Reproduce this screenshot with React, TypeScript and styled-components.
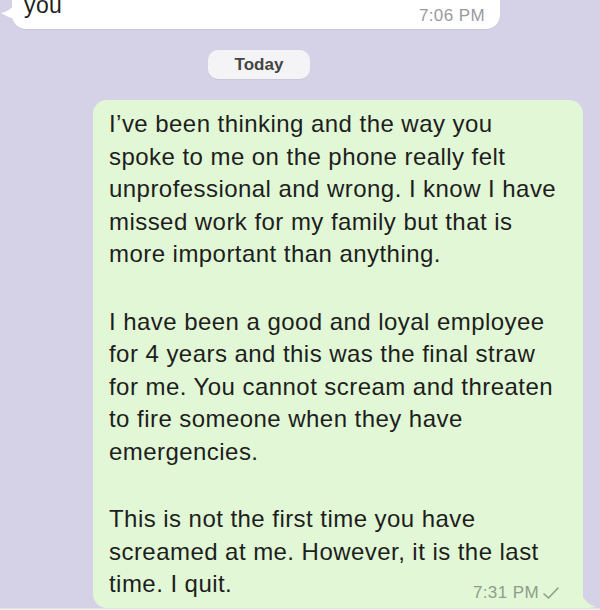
import styled, { createGlobalStyle } from 'styled-components';

const GlobalStyle = createGlobalStyle`
    html, body {
        margin: 0;
        padding: 0;
        background: #d5d1e7;
    }
    body {
        font-family: 'Liberation Sans', Arial, sans-serif;
        -webkit-font-smoothing: antialiased;
    }
`;

const Screen = styled.div`
    width: 600px;
    height: 610px;
    overflow: hidden;
    display: flex;
    flex-direction: column;
    background: #d5d1e7;
`;

// scrolled thread, first bubble partly off the top
const Thread = styled.div`
    flex: 1;
    display: flex;
    flex-direction: column;
    margin-top: -12px;
`;

const Incoming = styled.div`
    position: relative;
    margin-left: 12px;
    width: 488px;
    box-sizing: border-box;
    padding: 4px 15px 4px 12px;
    background: #ffffff;
    border-radius: 14px;
    display: flex;
    justify-content: space-between;
    align-items: flex-end;
    box-shadow: 0 1px 0 rgba(0, 0, 0, 0.06);
`;

const IncomingText = styled.div`
    font-size: 23px;
    line-height: 26px;
    letter-spacing: 0.4px;
    color: #1f1f1f;
    margin-bottom: 7px;
`;

const Time = styled.span<{ $tone?: 'in' | 'out' }>`
    font-size: 17px;
    line-height: 18px;
    letter-spacing: 0.4px;
    color: ${({ $tone }) => ($tone === 'out' ? '#8e9e8a' : '#9a9a9e')};
    white-space: nowrap;
`;

const Tail = styled.svg<{ $side: 'left' | 'right' }>`
    position: absolute;
    ${({ $side }) =>
        $side === 'left' ? 'left: -11px; top: 17px;' : 'right: -14px; bottom: 0;'}
`;

const DayRow = styled.div`
    width: 518px;
    display: flex;
    justify-content: center;
    margin-top: 21px;
`;

const DayPill = styled.div`
    width: 102px;
    height: 29px;
    border-radius: 10px;
    background: #f4f4f6;
    color: #444;
    font-weight: bold;
    font-size: 17px;
    display: flex;
    align-items: center;
    justify-content: center;
    box-shadow: 0 1px 0 rgba(0, 0, 0, 0.05);
`;

const Outgoing = styled.div`
    position: relative;
    margin: 21px 0 0 93px;
    width: 490px;
    box-sizing: border-box;
    padding: 8px 6px 6px 16px;
    background: #e1f7d5;
    border-radius: 14px 14px 4px 14px;
`;

const Paragraph = styled.p`
    margin: 0 0 35px;
    font-size: 24px;
    line-height: 32.5px;
    letter-spacing: 0.45px;
    color: #1e1e1e;
    white-space: pre-line;
    &:last-of-type {
        margin-bottom: 0;
    }
`;

const Meta = styled.div`
    display: flex;
    justify-content: flex-end;
    align-items: center;
    gap: 3px;
    margin: -17px 17px 0 0;
`;

const Footer = styled.div`
    height: 4px;
    background: #f1f1f3;
    border-top: 1px solid #e2e2e6;
`;

const paragraphs = [
    "I\u2019ve been thinking and the way you\nspoke to me on the phone really felt\nunprofessional and wrong. I know I have\nmissed work for my family but that is\nmore important than anything.",
    'I have been a good and loyal employee\nfor 4 years and this was the final straw\nfor me. You cannot scream and threaten\nto fire someone when they have\nemergencies.',
    'This is not the first time you have\nscreamed at me. However, it is the last\ntime. I quit.',
];

export default function App() {
    return (
        <Screen>
            <GlobalStyle />
            <Thread>
                <Incoming>
                    <Tail $side="left" width="14" height="14" viewBox="0 0 14 14">
                        <path d="M14 0 L14 14 C9 13 4 10 0 8 C5 7 10 4 14 0 Z" fill="#ffffff" />
                    </Tail>
                    <IncomingText>you</IncomingText>
                    <Time>7:06 PM</Time>
                </Incoming>
                <DayRow>
                    <DayPill>Today</DayPill>
                </DayRow>
                <Outgoing>
                    {paragraphs.map((text, i) => (
                        <Paragraph key={i}>{text}</Paragraph>
                    ))}
                    <Meta>
                        <Time $tone="out">7:31 PM</Time>
                        <svg width="18" height="14" viewBox="0 0 18 14">
                            <path
                                d="M2 8 L6.5 12 L16 2"
                                fill="none"
                                stroke="#8e9e8a"
                                strokeWidth="1.6"
                                strokeLinecap="round"
                                strokeLinejoin="round"
                            />
                        </svg>
                    </Meta>
                    <Tail $side="right" width="16" height="20" viewBox="0 0 16 20">
                        <path d="M0 0 C0 8 4 15 15 19 C10 20 4 20 0 20 Z" fill="#e1f7d5" />
                    </Tail>
                </Outgoing>
            </Thread>
            <Footer />
        </Screen>
    );
}
